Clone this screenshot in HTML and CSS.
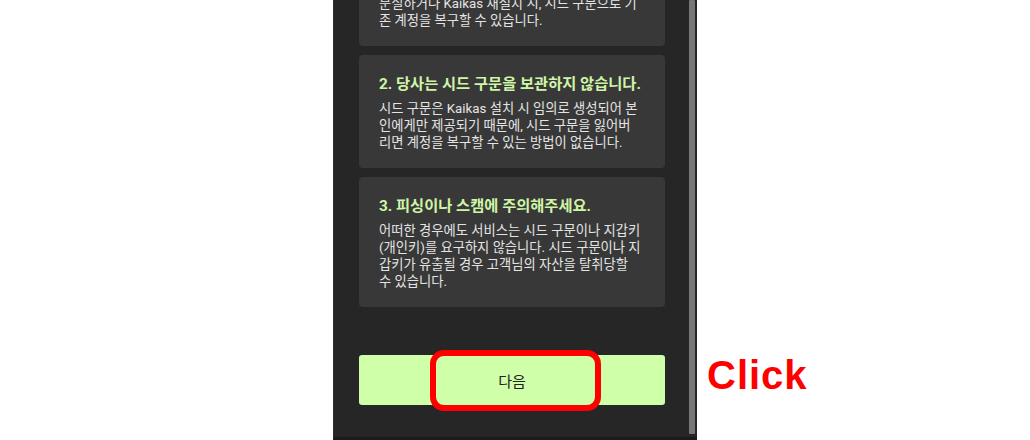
FILE: index.html
```html
<!DOCTYPE html>
<html lang="ko">
<head>
<meta charset="utf-8">
<title>Kaikas</title>
<link rel="stylesheet" href="styles.css">
</head>
<body>
<div class="stage">
  <div class="panel">
    <div class="scroll">
      <div class="content">
        <section class="card">
          <h3 class="card-title">1. 시드 구문을 안전하게 보관하세요.</h3>
          <p class="card-text">시드 구문을 보관하면 기기를 교체하거나 기기를<br>분실하거나 Kaikas 재설치 시, 시드 구문으로 기<br>존 계정을 복구할 수 있습니다.</p>
        </section>
        <section class="card">
          <h3 class="card-title">2. 당사는 시드 구문을 보관하지 않습니다.</h3>
          <p class="card-text">시드 구문은 Kaikas 설치 시 임의로 생성되어 본<br>인에게만 제공되기 때문에, 시드 구문을 잃어버<br>리면 계정을 복구할 수 있는 방법이 없습니다.</p>
        </section>
        <section class="card">
          <h3 class="card-title">3. 피싱이나 스캠에 주의해주세요.</h3>
          <p class="card-text">어떠한 경우에도 서비스는 시드 구문이나 지갑키<br>(개인키)를 요구하지 않습니다. 시드 구문이나 지<br>갑키가 유출될 경우 고객님의 자산을 탈취당할<br>수 있습니다.</p>
        </section>
        <div class="actions">
          <button class="next-btn" type="button">다음</button>
        </div>
      </div>
    </div>
    <div class="scrollbar"><div class="thumb"></div></div>
  </div>
  <div class="highlight"></div>
  <div class="click-label">Click</div>
</div>
</body>
</html>
```
FILE: styles.css
```css
* { box-sizing: border-box; }
html, body {
  margin: 0;
  padding: 0;
  background: #ffffff;
  overflow: hidden;
}
body {
  font-family: "Roboto", "Noto Sans CJK KR", sans-serif;
}
.stage {
  position: relative;
  width: 1030px;
  height: 440px;
  padding-left: 333px;
}
.panel {
  width: 364px;
  height: 440px;
  background: #262626;
  border-bottom: 3px solid #1b1b1b;
  border-left: 1px solid #2e2e2e;
  display: flex;
}
.scroll {
  flex: 1;
  overflow: hidden;
}
.content {
  margin-top: -67px;
  padding: 0 24px 0 25px;
  display: flex;
  flex-direction: column;
  gap: 9px;
}
.card {
  background: #383838;
  border-radius: 4px;
  padding: 19px 20px 17px 20px;
}
.card-title {
  margin: 0 0 6px 0;
  font-size: 15.3px;
  line-height: 20px;
  height: 20px;
  font-weight: 700;
  color: #cff5a6;
  white-space: nowrap;
}
.card-text {
  margin: 0;
  font-size: 13.3px;
  line-height: 17px;
  color: #e4e4e4;
  white-space: nowrap;
}
.actions {
  margin-top: 39px;
}
.next-btn {
  display: block;
  width: 100%;
  height: 50px;
  border: 0;
  border-radius: 3px;
  background: #d0ffa9;
  color: #222222;
  font-family: "Roboto", "Noto Sans CJK KR", sans-serif;
  font-size: 15px;
  cursor: pointer;
}
.scrollbar {
  width: 8px;
  padding: 0 2px 3px 0;
  background: #262626;
}
.thumb {
  width: 6px;
  height: 100%;
  background: #777777;
  border-radius: 1px;
}
.highlight {
  position: absolute;
  left: 430px;
  top: 350px;
  width: 171px;
  height: 61px;
  border: 6px solid #ff0000;
  border-radius: 14px;
}
.click-label {
  position: absolute;
  left: 707px;
  top: 355px;
  font-family: "Liberation Sans", Arial, sans-serif;
  font-weight: 700;
  font-size: 40px;
  line-height: 40px;
  letter-spacing: 1px;
  color: #ff0000;
}
```
